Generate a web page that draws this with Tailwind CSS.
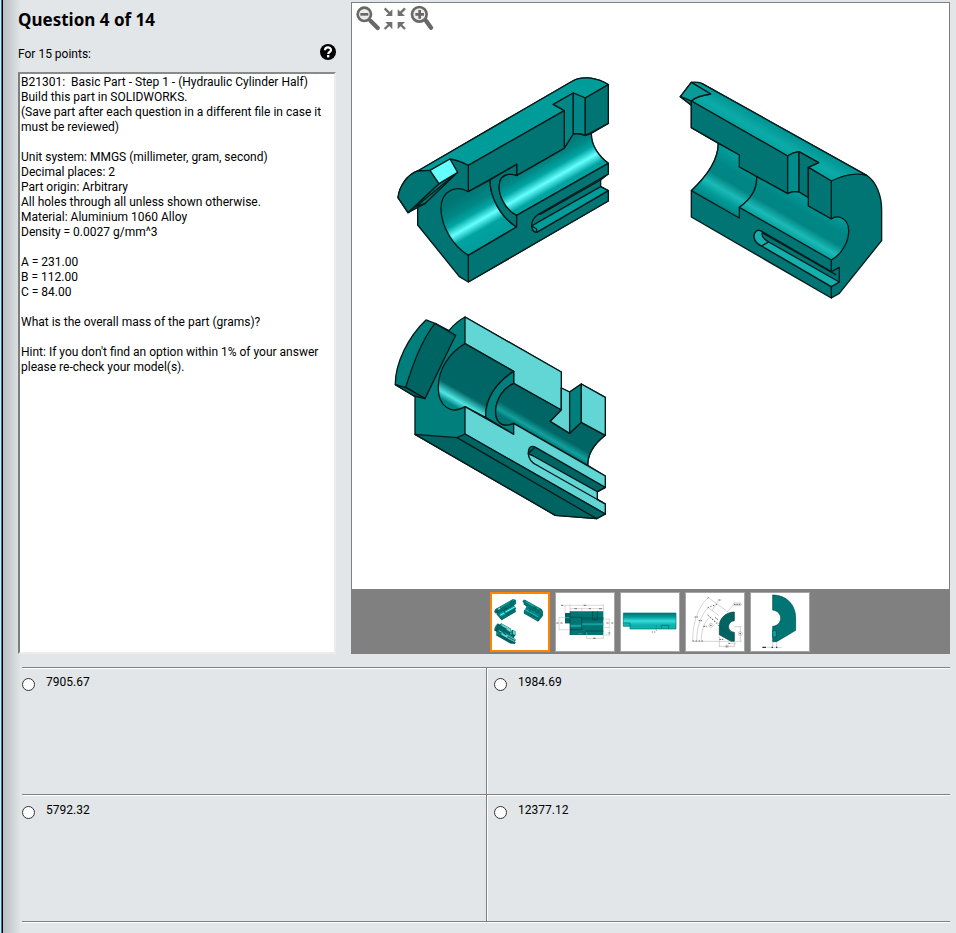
<!DOCTYPE html>
<html lang="en">
<head>
  <meta charset="UTF-8">
  <meta name="viewport" content="width=device-width, initial-scale=1">
  <title>Question 4 of 14</title>
  <script src="https://cdn.jsdelivr.net/npm/@tailwindcss/browser@4"></script>
</head>
<body class="flex min-h-screen bg-[#e2e6e9] font-[Roboto,'Open_Sans',sans-serif] text-[12px] leading-[15px] text-black">
  <!-- window edge -->
  <div class="w-[3px] shrink-0 border-r border-black bg-linear-to-r from-[#dfe3e6] from-50% to-[#2a7ab8] to-50%"></div>

  <main class="min-w-0 flex-1 bg-linear-to-r from-[#b9bfc2] to-[#e2e6e9] to-[18px] pt-[2px] pr-[6px] pl-[15px]">
    <div class="flex gap-[15px]">
      <section class="flex w-[318px] shrink-0 flex-col">
        <h1 class="pt-[6px] font-['Noto_Sans','Open_Sans',sans-serif] text-[17px] leading-[24px] font-bold">Question 4 of 14</h1>
        <div class="flex h-[40px] items-center justify-between">
          <p class="pt-[4px]">For 15 points:</p>
          <button type="button" aria-label="Help">
            <svg class="size-4" viewBox="0 0 16 16">
              <circle cx="8" cy="8" r="8" />
              <path d="M5 6.200C5 2.500 11 2.500 11 6.000C11 8 8.200 8 8.200 10" fill="none" stroke="#fff" stroke-width="2.200" />
              <rect x="7" y="11" width="2.400" height="2.400" fill="#fff" />
            </svg>
          </button>
        </div>
        <textarea readonly aria-label="Question text" class="flex-1 resize-none border-2 border-t-[#8a8a8a] border-r-[#ececec] border-b-[#ececec] border-l-[#7d7d7d] bg-white p-px outline-none">B21301:  Basic Part - Step 1 - (Hydraulic Cylinder Half)
Build this part in SOLIDWORKS.
(Save part after each question in a different file in case it must be reviewed)

Unit system: MMGS (millimeter, gram, second)
Decimal places: 2
Part origin: Arbitrary
All holes through all unless shown otherwise.
Material: Aluminium 1060 Alloy
Density = 0.0027 g/mm^3

A = 231.00
B = 112.00
C = 84.00

What is the overall mass of the part (grams)?

Hint: If you don't find an option within 1% of your answer please re-check your model(s).</textarea>
      </section>

      <section class="relative min-w-0 flex-1 border border-[#808080] bg-white">
        <div class="absolute top-[2px] left-[4px] flex">
          <button type="button" aria-label="Zoom out">
            <svg class="size-[26px]" viewBox="18 15 78 78" fill="none" stroke="#686868">
              <path d="M62 63L83 84" stroke-width="13" stroke-linecap="round" />
              <circle cx="43" cy="43" r="20" stroke-width="8" fill="#ececec" />
              <path d="M31 43H55" stroke-width="8" />
            </svg>
          </button>
          <button type="button" aria-label="Fit to window">
            <svg class="size-[26px]" viewBox="96 15 78 78" fill="none" stroke="#707070" stroke-width="7">
              <path d="M104 25L119 40M165 25L150 40M104 87L119 72M165 87L150 72" />
              <path fill="#707070" stroke="none" d="M127 28V48H107ZM143 28V48H165ZM127 88V66H106ZM143 88V66H165Z" />
            </svg>
          </button>
          <button type="button" aria-label="Zoom in">
            <svg class="size-[26px]" viewBox="174 15 78 78" fill="none" stroke="#686868">
              <path d="M228 62L243 83" stroke-width="13" stroke-linecap="round" />
              <circle cx="208" cy="43" r="22" stroke-width="8" fill="#ececec" />
              <path d="M196 43H222M209 30V56" stroke-width="8" />
            </svg>
          </button>
        </div>

        <svg class="block h-[586px] w-full" viewBox="0 0 597 586" role="img" aria-label="Hydraulic cylinder half, three views">
          <defs>
            <linearGradient id="boreA" gradientUnits="userSpaceOnUse" x1="214" y1="376" x2="296" y2="520">
              <stop offset="0" stop-color="#007573" />
              <stop offset=".25" stop-color="#008785" />
              <stop offset=".4" stop-color="#00a5a3" />
              <stop offset=".56" stop-color="#6ff" />
              <stop offset=".72" stop-color="#00a3a1" />
              <stop offset="1" stop-color="#009c9a" />
            </linearGradient>
            <linearGradient id="boreB" gradientUnits="userSpaceOnUse" x1="145" y1="220" x2="64" y2="361">
              <stop offset="0" stop-color="#00a09e" />
              <stop offset=".3" stop-color="#008785" />
              <stop offset=".52" stop-color="#008583" />
              <stop offset=".7" stop-color="#1cbab7" />
              <stop offset=".85" stop-color="#009c9a" />
              <stop offset="1" stop-color="#008785" />
            </linearGradient>
            <linearGradient id="topB" gradientUnits="userSpaceOnUse" x1="300" y1="155" x2="260" y2="225">
              <stop offset="0" stop-color="#009492" />
              <stop offset=".5" stop-color="#0caba8" />
              <stop offset="1" stop-color="#009c9a" />
            </linearGradient>
            <linearGradient id="boreC" gradientUnits="userSpaceOnUse" x1="240" y1="101" x2="145" y2="268">
              <stop offset="0" stop-color="#006463" />
              <stop offset=".68" stop-color="#006766" />
              <stop offset=".83" stop-color="#4fe6e3" />
              <stop offset=".93" stop-color="#008785" />
            </linearGradient>
            <linearGradient id="boreD" gradientUnits="userSpaceOnUse" x1="386" y1="220" x2="334" y2="310">
              <stop offset="0" stop-color="#006463" />
              <stop offset=".65" stop-color="#006766" />
              <stop offset=".86" stop-color="#12a19e" />
              <stop offset="1" stop-color="#007573" />
            </linearGradient>
          </defs>
          <g id="parts" stroke="#001a1a" stroke-width="4" stroke-linejoin="round" stroke-linecap="round">
            <!-- upper left view -->
            <g transform="translate(38 67) scale(.3333)" fill="#007573">
              <path d="M24 383C28 350 50 315 83 303L548 33C580 15 625 25 655 44V160L604 190C603 225 625 258 655 280V312L632 330V350L655 362V393L235 636L208 620L83 465V408L54 428Z" />
              <path fill="#009c9a" d="M83 303L548 33C580 15 625 25 655 44L586 84L550 69L490 103L523 122L235 286Q210 272 180 267L120 301Z" />
              <path d="M24 383C28 350 50 315 83 303L120 301L147 341L54 428Z" />
              <path d="M147 341L203 307L106 400L54 428Z" />
              <path fill="#6ff" d="M120 301L180 267L203 307L147 341Z" />
              <path fill="none" d="M106 400L83 408M76 411L185 322" />
              <path fill="#008785" d="M550 69L490 103L523 122V235L550 192Z" />
              <path fill="#008785" d="M550 69L586 84V197Q570 189 550 192Z" />
              <path d="M586 84L655 44V160L586 197Z" />
              <path d="M235 286L523 122V235L380 317V283L235 365Z" />
              <path fill="url(#boreA)" d="M235 365L300 330C300 380 330 440 380 471L235 556C190 530 153 470 153 415C153 360 200 345 235 365Z" />
              <path d="M300 330C300 380 330 440 380 471V436C340 415 325 370 328 345C330 315 355 308 380 317V283Z" />
              <path fill="url(#boreA)" d="M380 317L523 235L550 192Q570 189 586 197L604 190C603 225 625 258 655 280L380 436C340 415 325 370 328 345C330 315 355 308 380 317Z" />
              <path d="M235 556L380 471V436L655 280V312L445 433Q424 446 425 470Q428 488 440 487L655 362V393L235 636Z" />
              <path fill="#009c9a" d="M425 468L447 455L632 350L655 362L440 487Q427 484 425 468Z" />
              <path fill="none" d="M425 468L440 477V487M632 330L450 433" />
            </g>
            <!-- upper right view -->
            <g transform="translate(318 67) scale(.3333)" fill="#007573">
              <path d="M64 37L95 40L590 316C620 335 635 380 635 420V512L508 670L484 684L64 441V362C120 310 145 260 145 220L64 173V106L31 80Z" />
              <path fill="url(#topB)" d="M64 93Q85 76 122 72L64 37Q82 35 95 40L590 316C560 308 520 315 484 333L415 292L446 278L387 245Q365 249 353 258Z" />
              <path fill="#0a9a98" d="M31 80L64 37L122 72Q80 78 64 93Z" />
              <path d="M31 80L64 93V106Z" />
              <path d="M64 93L353 258V371L208 291V255L64 173Z" />
              <path fill="#008c8a" d="M353 258Q367 248 387 245V366Q368 362 353 371Z" />
              <path d="M387 245L446 278L415 292V383L387 366Z" />
              <path d="M415 292L484 333V447L415 408Z" />
              <path fill="url(#boreB)" d="M145 220L208 255V291L260 320C262 360 240 390 208 412V444L64 362C120 310 145 260 145 220Z" />
              <path fill="url(#boreB)" d="M260 320L353 371Q368 362 387 366L415 383V408L484 447C500 435 534 440 536 480C537 510 520 550 484 570L208 412C240 390 262 360 260 320Z" />
              <path d="M275 484C262 477 252 485 252 500C253 512 262 522 275 528L484 650L508 636V592L484 605Z" />
              <path fill="#14b0ad" d="M275 484C262 477 252 485 252 500C253 512 262 522 275 528L296 516Q270 500 278 486Z" />
              <path fill="#14b0ad" d="M275 528L296 516L508 636L484 650Z" />
              <path fill="none" d="M280 490L497 614M484 570V605M484 650V684" />
            </g>
            <!-- lower view, seen from below -->
            <g transform="translate(33 307) scale(.3333)" fill="#007f7d">
              <path d="M123 30L150 40L192 62Q212 36 240 21L529 186V234L554 246L589 222L661 262V376C630 400 608 430 608 466L661 498V532L637 545V568L661 582V612L635 626L511 616L90 373V260L31 224C30 160 70 80 123 30Z" />
              <path fill="#62d6d4" d="M240 21L529 186V300L386 220V184L240 101Z" />
              <path fill="url(#boreC)" d="M240 101L386 184C330 220 300 270 302 322L240 290C200 315 158 290 160 230C160 180 190 130 240 101Z" />
              <path d="M386 184C330 220 300 270 302 322L386 373V340C350 355 330 335 332 300C335 265 355 235 386 220Z" />
              <path fill="url(#boreD)" d="M386 220L529 300L496 334L554 370L589 337L661 376C630 400 608 430 608 466L386 340C350 355 330 335 332 300C335 265 355 235 386 220Z" />
              <path fill="#62d6d4" d="M529 234L554 246V370L496 334L529 300Z" />
              <path d="M554 246L589 222V337L554 370Z" />
              <path fill="#62d6d4" d="M589 222L661 262V376L589 337Z" />
              <path fill="#62d6d4" d="M240 290L386 373V340L661 498V532L637 545V568L661 582V612L240 372Z" />
              <path fill="#006463" d="M90 373L216 383L240 372L661 612L635 626L511 616Z" />
              <path fill="none" d="M216 383L635 626" />
              <path fill="#006463" d="M430 430Q430 402 452 412L661 532L637 545L445 438L430 432Z" />
              <path fill="none" d="M430 430C430 450 445 462 460 468L661 582M450 412L432 428" />
              <path fill="#006463" d="M150 40L212 76L120 266L62 232C85 160 110 90 150 40Z" />
              <path fill="#006463" d="M31 224L62 232L120 266L88 258Z" />
            </g>
          </g>
        </svg>

        <div class="flex h-[64px] justify-center gap-[5px] bg-[#808080] pt-[3px] pr-[2px]">
          <button type="button" aria-label="View 1" class="size-[60px] border-2 border-[#ff8400] bg-white">
            <svg class="size-full" viewBox="20 20 560 560"><use href="#parts" /></svg>
          </button>
          <button type="button" aria-label="View 2" class="size-[60px] border border-[#a6a6a6] bg-white">
            <svg class="size-full" viewBox="213 24 174 174">
              <path fill="#007573" d="M240 84H255V79H355V150H255V115H240Z" />
              <path fill="#006463" d="M240 84H255V115H240ZM290 96H355V106H290Z" />
              <path fill="#12a19e" d="M255 119H290V126H255ZM290 115H355V121H290ZM240 96H255V100H240Z" />
              <path fill="none" stroke="#003f3e" stroke-width="2" d="M255 79V150M290 97V134H255M290 97H255M323 79V104H337V79M355 138H305L298 143" />
              <g fill="none" stroke="#b5b5b5" stroke-width="1.500">
                <path d="M240 61V84M255 58V79M355 58V79M232 61H355M255 71H355M290 68V79M305 142V162M355 150V162M305 160H355M222 97V134M222 97H240M222 134H255M373 102V128M355 102H376M355 128H376M373 135V152M355 150H376" />
              </g>
              <path fill="none" stroke="#777" stroke-width="3" d="M228 61H234M296 61H304M268 71H276M311 71H318M342 71H350M214 114H221M226 114H233M364 114H371M379 114H385M324 160H332M280 146H291M370 144H376" />
            </svg>
          </button>
          <button type="button" aria-label="View 3" class="size-[60px] border border-[#a6a6a6] bg-white">
            <svg class="size-full" viewBox="-87 24 174 174">
              <defs>
                <linearGradient id="side" x1="0" y1="0" x2="0" y2="1">
                  <stop offset="0" stop-color="#007573" />
                  <stop offset=".25" stop-color="#009c9a" />
                  <stop offset=".5" stop-color="#35dedb" />
                  <stop offset=".75" stop-color="#12b0ad" />
                  <stop offset="1" stop-color="#12b0ad" />
                </linearGradient>
              </defs>
              <path fill="url(#side)" stroke="#007573" stroke-width="2" d="M-80 84H78V132H-60V124H-80Z" />
              <path fill="none" stroke="#006463" stroke-width="2" d="M-80 114H-60V124M34 132V121H56V132" />
              <path fill="none" stroke="#555" stroke-width="2" stroke-dasharray="4 3" d="M19 122V138M5 141H16" />
            </svg>
          </button>
          <button type="button" aria-label="View 4" class="size-[60px] border border-[#a6a6a6] bg-white">
            <svg class="size-full" viewBox="108 24 174 174">
              <path fill="#006463" stroke="#003f3e" stroke-width="2" d="M253 81V107C230 109 230 141 253 142V169H243L208 149V122C209 98 228 82 253 81Z" />
              <g fill="none" stroke="#aaa" stroke-width="1.500">
                <path d="M128 169C128 110 145 65 175 38M140 169C140 125 152 90 175 68M154 169C154 135 162 112 178 98M128 169H243M175 38L235 82M175 68L207 92M173 90L208 118M208 150V186M253 169V186M208 184H253M240 175H258M253 125H275M271 125V169M253 169H275M205 48L185 78M232 81L250 60" />
                <rect x="249" y="54" width="25" height="8" rx="4" />
                <circle cx="183" cy="121" r="6" />
                <circle cx="271" cy="146" r="6" />
                <ellipse cx="231" cy="184" rx="6" ry="4" />
              </g>
              <path fill="none" stroke="#666" stroke-width="3" stroke-dasharray="5 2" d="M134 96H144M146 107H156M160 124H170M205 45H214M252 58H271M195 97L204 104M208 163H222M235 175H241M268 146H274M228 184H234M180 121H186" />
              <path fill="none" stroke="#333" stroke-width="3" stroke-dasharray="3 6" d="M128 168H160M173 39L179 36M173 68L200 58M173 90L205 120L235 150" />
            </svg>
          </button>
          <button type="button" aria-label="View 5" class="size-[60px] border border-[#a6a6a6] bg-white">
            <svg class="size-full" viewBox="303 24 174 174">
              <path fill="#007573" stroke="#004b4a" stroke-width="2" d="M368 30C410 30 437 60 437 99V136L380 170H368V124C400 121 400 79 368 75Z" />
              <path fill="#12a19e" stroke="#004b4a" stroke-width="2" d="M368 137H379V156H368Z" />
              <path fill="none" stroke="#aaa" stroke-width="1.500" d="M368 170V190M380 170V190M350 187H395" />
              <path fill="none" stroke="#333" stroke-width="4" d="M337 187H348M365 187H369M378 187H382" />
            </svg>
          </button>
        </div>
      </section>
    </div>

    <!-- answers -->
    <fieldset class="mt-[13px] ml-[4px] grid grid-cols-2 border-t border-[#808080]">
      <label class="flex h-[127px] items-start gap-[11px] border-b border-[#808080] pt-[7px] shadow-[inset_0_1px_#fff]">
        <input type="radio" name="answer" class="mt-[3px] size-[13px] appearance-none rounded-full border border-[#333] bg-white checked:border-4">
        <span>7905.67</span>
      </label>
      <label class="flex h-[127px] items-start gap-[11px] border-b border-l border-[#808080] pt-[7px] pl-[7px] shadow-[inset_1px_1px_#fff]">
        <input type="radio" name="answer" class="mt-[3px] size-[13px] appearance-none rounded-full border border-[#333] bg-white checked:border-4">
        <span>1984.69</span>
      </label>
      <label class="flex h-[127px] items-start gap-[11px] border-b border-[#808080] pt-[8px] shadow-[inset_0_1px_#fff,0_1px_#fff]">
        <input type="radio" name="answer" class="mt-[3px] size-[13px] appearance-none rounded-full border border-[#333] bg-white checked:border-4">
        <span>5792.32</span>
      </label>
      <label class="flex h-[127px] items-start gap-[11px] border-b border-l border-[#808080] pt-[8px] pl-[7px] shadow-[inset_1px_1px_#fff,0_1px_#fff]">
        <input type="radio" name="answer" class="mt-[3px] size-[13px] appearance-none rounded-full border border-[#333] bg-white checked:border-4">
        <span>12377.12</span>
      </label>
    </fieldset>
  </main>
</body>
</html>
